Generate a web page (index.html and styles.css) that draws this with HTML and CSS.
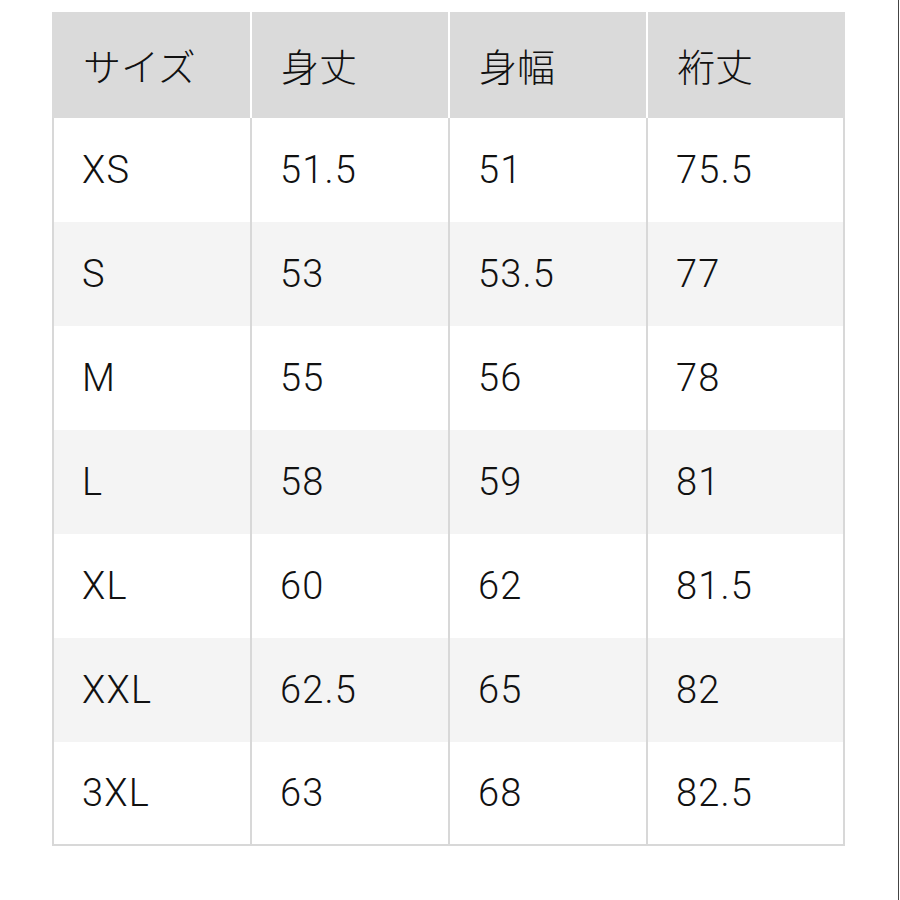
FILE: index.html
```html
<!DOCTYPE html>
<html lang="ja">
<head>
<meta charset="utf-8">
<title>サイズ表</title>
<link rel="stylesheet" href="styles.css">
</head>
<body>
<div class="page">
  <div class="size-table">
    <div class="row head">
      <div class="cell">サイズ</div>
      <div class="cell">身丈</div>
      <div class="cell">身幅</div>
      <div class="cell">裄丈</div>
    </div>
    <div class="row">
      <div class="cell">XS</div><div class="cell">51.5</div><div class="cell">51</div><div class="cell">75.5</div>
    </div>
    <div class="row alt">
      <div class="cell">S</div><div class="cell">53</div><div class="cell">53.5</div><div class="cell">77</div>
    </div>
    <div class="row">
      <div class="cell">M</div><div class="cell">55</div><div class="cell">56</div><div class="cell">78</div>
    </div>
    <div class="row alt">
      <div class="cell">L</div><div class="cell">58</div><div class="cell">59</div><div class="cell">81</div>
    </div>
    <div class="row">
      <div class="cell">XL</div><div class="cell">60</div><div class="cell">62</div><div class="cell">81.5</div>
    </div>
    <div class="row alt">
      <div class="cell">XXL</div><div class="cell">62.5</div><div class="cell">65</div><div class="cell">82</div>
    </div>
    <div class="row last">
      <div class="cell">3XL</div><div class="cell">63</div><div class="cell">68</div><div class="cell">82.5</div>
    </div>
  </div>
</div>
</body>
</html>
```

FILE: styles.css
```css
html, body {
  margin: 0;
  padding: 0;
  background: #ffffff;
}

.page {
  box-sizing: border-box;
  width: 899px;
  height: 900px;
  border-right: 1px solid #444444;
  padding: 12px 0 0 52px;
  font-family: Roboto, "Liberation Sans", "Noto Sans CJK JP", sans-serif;
  font-weight: 300;
  color: #111111;
}

.size-table {
  width: 793px;
  display: flex;
  flex-direction: column;
}

.row {
  display: grid;
  grid-template-columns: 198px 198px 198px 199px;
  height: 104px;
  background: #ffffff;
}

.row.alt {
  background: #f4f4f4;
}

.row.head {
  height: 106px;
  background: #dadada;
}

.cell {
  box-sizing: border-box;
  display: flex;
  align-items: center;
  padding-left: 28px;
  font-size: 38px;
  line-height: 1;
  letter-spacing: 1.2px;
  border-left: 2px solid #d8d8d8;
}

.cell:last-child {
  border-right: 2px solid #d8d8d8;
}

.row.head .cell {
  padding-left: 29px;
  border-left-color: #ffffff;
  border-right-color: #dadada;
  font-family: "Noto Sans CJK JP", sans-serif;
  font-weight: 300;
  letter-spacing: 0;
}

.row.head .cell:first-child {
  border-left-color: #dadada;
}

.row.last .cell {
  border-bottom: 2px solid #d8d8d8;
}
```
